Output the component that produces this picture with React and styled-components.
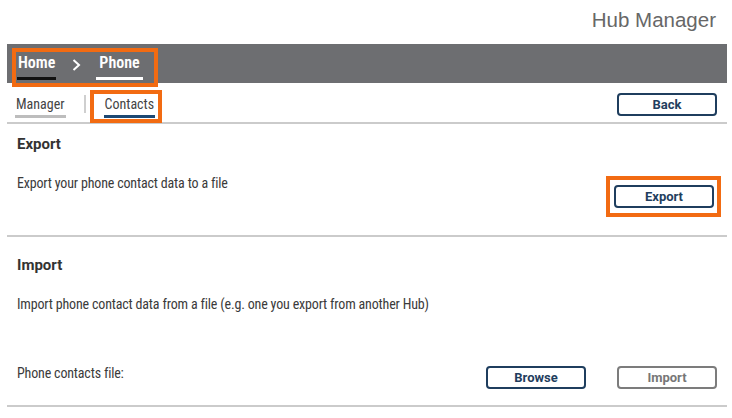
import React from "react"
import styled, { createGlobalStyle, css } from "styled-components"

const GlobalStyle = createGlobalStyle`
  body {
    margin: 0;
    background: #fff;
    font-family: Roboto, "Liberation Sans", sans-serif;
    font-stretch: 85%;
    color: #3b3b3b;
  }
`

const App = () => (
  <>
    <GlobalStyle />
    <Page>
      <Header>
        <Title>Hub Manager</Title>
      </Header>

      <NavBar>
        <Breadcrumb>
          <Crumb $line="#111">Home</Crumb>
          <Chevron viewBox="0 0 9 12">
            <polyline points="1.5,1 7,6 1.5,11" />
          </Chevron>
          <Crumb $line="#fff" $pad={3}>Phone</Crumb>
        </Breadcrumb>
      </NavBar>

      <TabRow>
        <Tabs>
          <Tab $line="#bdbdbd">Manager</Tab>
          <TabDivider />
          <TabMark>
            <Tab $line="#1c4873">Contacts</Tab>
          </TabMark>
        </Tabs>
        <Button>Back</Button>
      </TabRow>

      <Section $top={10} $bottom={22}>
        <Heading>Export</Heading>
        <Row>
          <Text>Export your phone contact data to a file</Text>
          <ButtonMark>
            <Button>Export</Button>
          </ButtonMark>
        </Row>
      </Section>

      <Section $top={18} $bottom={16}>
        <Heading>Import</Heading>
        <Text>Import phone contact data from a file (e.g. one you export from another Hub)</Text>
        <Row $gap={49}>
          <Text>Phone contacts file:</Text>
          <Actions>
            <Button>Browse</Button>
            <Button $disabled>Import</Button>
          </Actions>
        </Row>
      </Section>
    </Page>
  </>
)

export default App

const orange = "#f26b12"
const navy = "#1f3e5e"

const Page = styled.div`
  width: 720px;
  padding: 0 5px 0 7px;
`

const Header = styled.header`
  height: 44px;
  display: flex;
  justify-content: flex-end;
  align-items: center;
  padding-right: 11px;
`

const Title = styled.h1`
  margin: 0 0 4px;
  font-family: "Liberation Sans", sans-serif;
  font-stretch: normal;
  font-weight: 400;
  font-size: 20.5px;
  color: #676767;
`

const NavBar = styled.nav`
  height: 39px;
  background: #6d6e71;
  display: flex;
  align-items: flex-end;
  padding-left: 9px;
`

const Breadcrumb = styled.div`
  display: flex;
  align-items: flex-end;
  height: 31px;
  padding: 0 11px 0 1px;
  outline: 4px solid ${orange};
`

const Crumb = styled.span`
  margin-bottom: 3px;
  padding: 0 ${p => p.$pad || 1}px 4px;
  line-height: 20px;
  font-size: 16px;
  font-weight: 600;
  color: #fff;
  border-bottom: 3px solid ${p => p.$line};
`

const Chevron = styled.svg`
  flex-shrink: 0;
  width: 9px;
  height: 12px;
  margin: 0 15px 12px 16px;
  fill: none;
  stroke: #fff;
  stroke-width: 2;
`

const TabRow = styled.div`
  height: 41px;
  box-sizing: border-box;
  padding: 10px 10px 0 8px;
  display: flex;
  justify-content: space-between;
  align-items: flex-start;
  border-bottom: 2px solid #cbcbcb;
`

const Tabs = styled.div`
  display: flex;
  align-items: center;
  margin-top: 1px;
`

const Tab = styled.span`
  display: block;
  padding: 0 1px 2px;
  line-height: 18px;
  font-size: 14px;
  color: #444;
  border-bottom: 3px solid ${p => p.$line};
`

const TabDivider = styled.span`
  align-self: flex-start;
  width: 2px;
  height: 18px;
  margin: 1px 0 0 18px;
  background: #cfcfcf;
`

const TabMark = styled.div`
  margin-left: 8px;
  padding: 1px 3px 1px 10px;
  outline: 4px solid ${orange};
`

const Section = styled.section`
  padding: ${p => p.$top}px 10px ${p => p.$bottom}px;
  border-bottom: 2px solid #cbcbcb;
`

const Heading = styled.h2`
  margin: 0 0 19px;
  line-height: 20px;
  font-size: 15px;
  font-stretch: 95%;
  font-weight: 700;
  color: #333;
`

const Text = styled.p`
  margin: 0;
  line-height: 20px;
  font-size: 14px;
  letter-spacing: -0.17px;
`

const Row = styled.div`
  display: flex;
  justify-content: space-between;
  align-items: flex-start;
  margin-top: ${p => p.$gap || 0}px;
`

const Actions = styled.div`
  display: flex;
  gap: 31px;
  margin-top: 3px;
`

const ButtonMark = styled.div`
  margin: 7px 0 0;
  padding: 5px 3px 5px 4px;
  outline: 4px solid ${orange};
`

const Button = styled.button`
  width: 100px;
  height: 23px;
  padding: 0;
  box-sizing: border-box;
  background: #fff;
  border: 2px solid ${navy};
  border-radius: 4px;
  font-family: Roboto, "Liberation Sans", sans-serif;
  font-stretch: 88%;
  font-size: 13px;
  font-weight: 700;
  color: ${navy};
  ${p => p.$disabled && css`
    border-color: #7c7c7c;
    color: #777;
  `}
`
